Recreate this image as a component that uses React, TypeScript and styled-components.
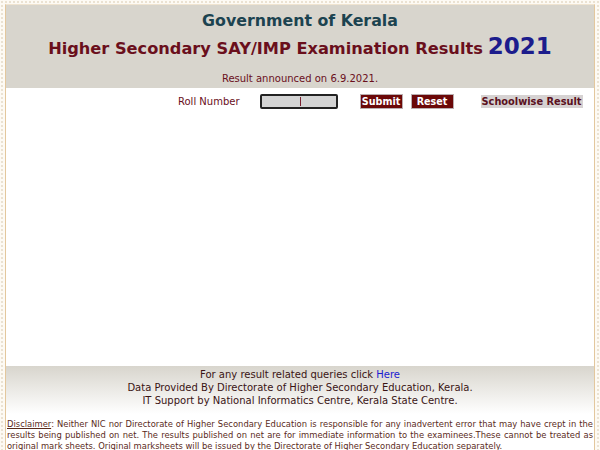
import React from "react";
import styled, { createGlobalStyle } from "styled-components";

const GlobalStyle = createGlobalStyle`
  html, body {
    margin: 0;
    padding: 0;
    height: 100%;
    overflow: hidden;
  }
  body {
    background-color: #fdfaf4;
    background-image: radial-gradient(circle, #ebe2d2 1px, transparent 1.2px);
    background-size: 4px 4px;
    font-family: "DejaVu Sans", Verdana, sans-serif;
  }
`;

const Page = styled.div`
  width: 588px;
  margin: 4px auto 0;
  border-left: 1px solid #e3c79d;
  border-right: 1px solid #e3c79d;
  border-top: 1px solid #f0e4d0;
  background: #ffffff;
  height: 460px;
  display: flex;
  flex-direction: column;
`;

const Header = styled.div`
  background: #d8d5cd;
  height: 83px;
  display: flex;
  flex-direction: column;
  align-items: center;
  padding-top: 5px;
  box-sizing: border-box;
  white-space: nowrap;
`;

const GovTitle = styled.div`
  font-size: 15.8px;
  font-weight: bold;
  color: #1c4350;
  line-height: 22px;
`;

const ExamTitle = styled.div`
  font-size: 16.2px;
  font-weight: bold;
  color: #6a0f1c;
  line-height: 28px;
`;

const Year = styled.span`
  font-size: 23px;
  color: #1c1c8c;
  margin-left: 5px;
`;

const Announced = styled.div`
  font-size: 10px;
  line-height: 12px;
  color: #6a0f1c;
  margin-top: 10px;
`;

const FormRow = styled.div`
  display: flex;
  align-items: center;
  height: 26px;
  padding-left: 172px;
  white-space: nowrap;
`;

const Label = styled.span`
  font-size: 10px;
  color: #6a0f1c;
`;

const RollInput = styled.div`
  position: relative;
  width: 74px;
  height: 11px;
  margin-left: 20px;
  background: #d3d3d3;
  border: 2px solid #222;
  border-radius: 2px;
  &::after {
    content: "";
    position: absolute;
    left: 38px;
    top: 1px;
    width: 1px;
    height: 9px;
    background: #7a2030;
  }
`;

const Button = styled.button<{ gap: number }>`
  margin-left: ${({ gap }) => gap}px;
  width: 43px;
  height: 15px;
  padding: 0;
  background: #6b0808;
  color: #fff;
  font-family: "DejaVu Sans", Verdana, sans-serif;
  font-weight: bold;
  font-size: 9.6px;
  line-height: 13px;
  border: 1px solid #b9aeb0;
  cursor: pointer;
`;

const SchoolLink = styled.span`
  margin-left: 27px;
  background: #d6d2d2;
  color: #5a1020;
  font-size: 9.8px;
  font-weight: bold;
  padding: 1px 1px;
`;

const Blank = styled.div`
  min-height: 252px;
`;

const Footer = styled.div`
  background: linear-gradient(#d8d5cd, #ffffff);
  height: 46px;
  display: flex;
  flex-direction: column;
  align-items: center;
  padding-top: 2px;
  font-size: 10px;
  line-height: 13px;
  color: #3a1414;
`;

const Here = styled.a`
  color: #1a1ad0;
  text-decoration: none;
`;

const Disclaimer = styled.p`
  margin: 5px 0 0;
  padding: 0 1px;
  font-size: 8.4px;
  line-height: 11px;
  text-align: justify;
  color: #5a2a1a;
`;

const Underlined = styled.span`
  text-decoration: underline;
`;

export default function App() {
  return (
    <>
      <GlobalStyle />
      <Page>
        <Header>
          <GovTitle>Government of Kerala</GovTitle>
          <ExamTitle>
            Higher Secondary SAY/IMP Examination Results<Year>2021</Year>
          </ExamTitle>
          <Announced>Result announced on 6.9.2021.</Announced>
        </Header>
        <FormRow>
          <Label>Roll Number</Label>
          <RollInput />
          <Button gap={22}>Submit</Button>
          <Button gap={8}>Reset</Button>
          <SchoolLink>Schoolwise Result</SchoolLink>
        </FormRow>
        <Blank />
        <Footer>
          <div>
            For any result related queries click <Here href="#">Here</Here>
          </div>
          <div>Data Provided By Directorate of Higher Secondary Education, Kerala.</div>
          <div>IT Support by National Informatics Centre, Kerala State Centre.</div>
        </Footer>
        <Disclaimer>
          <Underlined>Disclaimer</Underlined>: Neither NIC nor Directorate of Higher
          Secondary Education is responsible for any inadvertent error that may have
          crept in the results being published on net. The results published on net are
          for immediate information to the examinees.These cannot be treated as original
          mark sheets. Original marksheets will be issued by the Directorate of Higher
          Secondary Education separately.
        </Disclaimer>
      </Page>
    </>
  );
}
